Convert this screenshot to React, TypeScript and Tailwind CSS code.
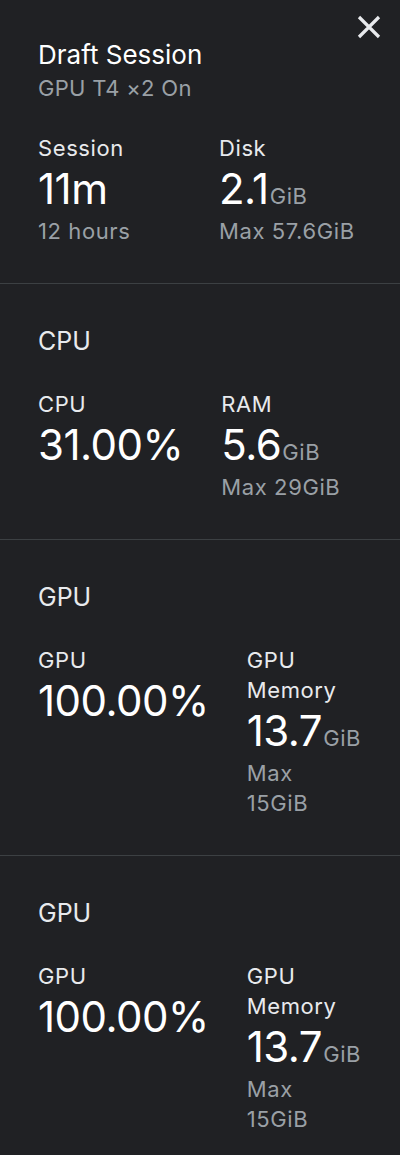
import React from "react";

const font = { fontFamily: "Inter, 'Noto Sans', sans-serif" };

function Label({ children }: { children: React.ReactNode }) {
  return <div className="text-[22px] leading-[30px] tracking-[0.6px] text-[#e8eaed]">{children}</div>;
}

function Value({ value, unit }: { value: string; unit?: string }) {
  return (
    <div className="mt-[2px] text-[42px] leading-[48px] text-white tracking-[-0.5px] whitespace-nowrap">
      {value}
      {unit && (
        <span className="text-[22px] leading-none tracking-[0.6px] text-[#9aa0a6] ml-[1px]">{unit}</span>
      )}
    </div>
  );
}

function Sub({ children }: { children: React.ReactNode }) {
  return <div className="mt-[3px] text-[22px] leading-[30px] tracking-[0.6px] text-[#9aa0a6]">{children}</div>;
}

function Stat({
  label,
  value,
  unit,
  sub,
  first,
}: {
  label: string;
  value: string;
  unit?: string;
  sub?: string;
  first?: boolean;
}) {
  return (
    <div className={first ? "shrink-0 min-w-[181px] pr-[38px]" : "min-w-0"}>
      <Label>{label}</Label>
      <Value value={value} unit={unit} />
      {sub && <Sub>{sub}</Sub>}
    </div>
  );
}

function Section({
  title,
  left,
  right,
}: {
  title: string;
  left: React.ReactNode;
  right: React.ReactNode;
}) {
  return (
    <div className="border-t border-[#3c4043] pl-[38px] pr-[44px] pt-[42px] pb-[37px]">
      <div className="text-[25px] leading-[30px] text-[#e8eaed]">{title}</div>
      <div className="mt-[33px] flex items-start">
        {left}
        {right}
      </div>
    </div>
  );
}

export default function App() {
  return (
    <div className="w-[400px] min-h-[1155px] bg-[#202124] relative overflow-hidden" style={font}>
      <button className="absolute top-[15px] right-[19px] w-[24px] h-[24px]" aria-label="Close">
        <svg width="24" height="24" viewBox="0 0 24 24">
          <path d="M2 2L22 22M22 2L2 22" stroke="#e8eaed" strokeWidth="3.2" />
        </svg>
      </button>

      <div className="px-[38px] pt-[39px] pb-[37px]">
        <div className="text-[26px] leading-[32px] text-white">Draft Session</div>
        <div className="mt-[2px] text-[22px] leading-[30px] tracking-[0.3px] text-[#9aa0a6]">GPU T4 ×2 On</div>
        <div className="mt-[30px] flex items-start">
          <Stat first label="Session" value="11m" sub="12 hours" />
          <Stat label="Disk" value="2.1" unit="GiB" sub="Max 57.6GiB" />
        </div>
      </div>

      <Section
        title="CPU"
        left={<Stat first label="CPU" value="31.00%" />}
        right={<Stat label="RAM" value="5.6" unit="GiB" sub="Max 29GiB" />}
      />
      <Section
        title="GPU"
        left={<Stat first label="GPU" value="100.00%" />}
        right={<Stat label="GPU Memory" value="13.7" unit="GiB" sub="Max 15GiB" />}
      />
      <Section
        title="GPU"
        left={<Stat first label="GPU" value="100.00%" />}
        right={<Stat label="GPU Memory" value="13.7" unit="GiB" sub="Max 15GiB" />}
      />
    </div>
  );
}
